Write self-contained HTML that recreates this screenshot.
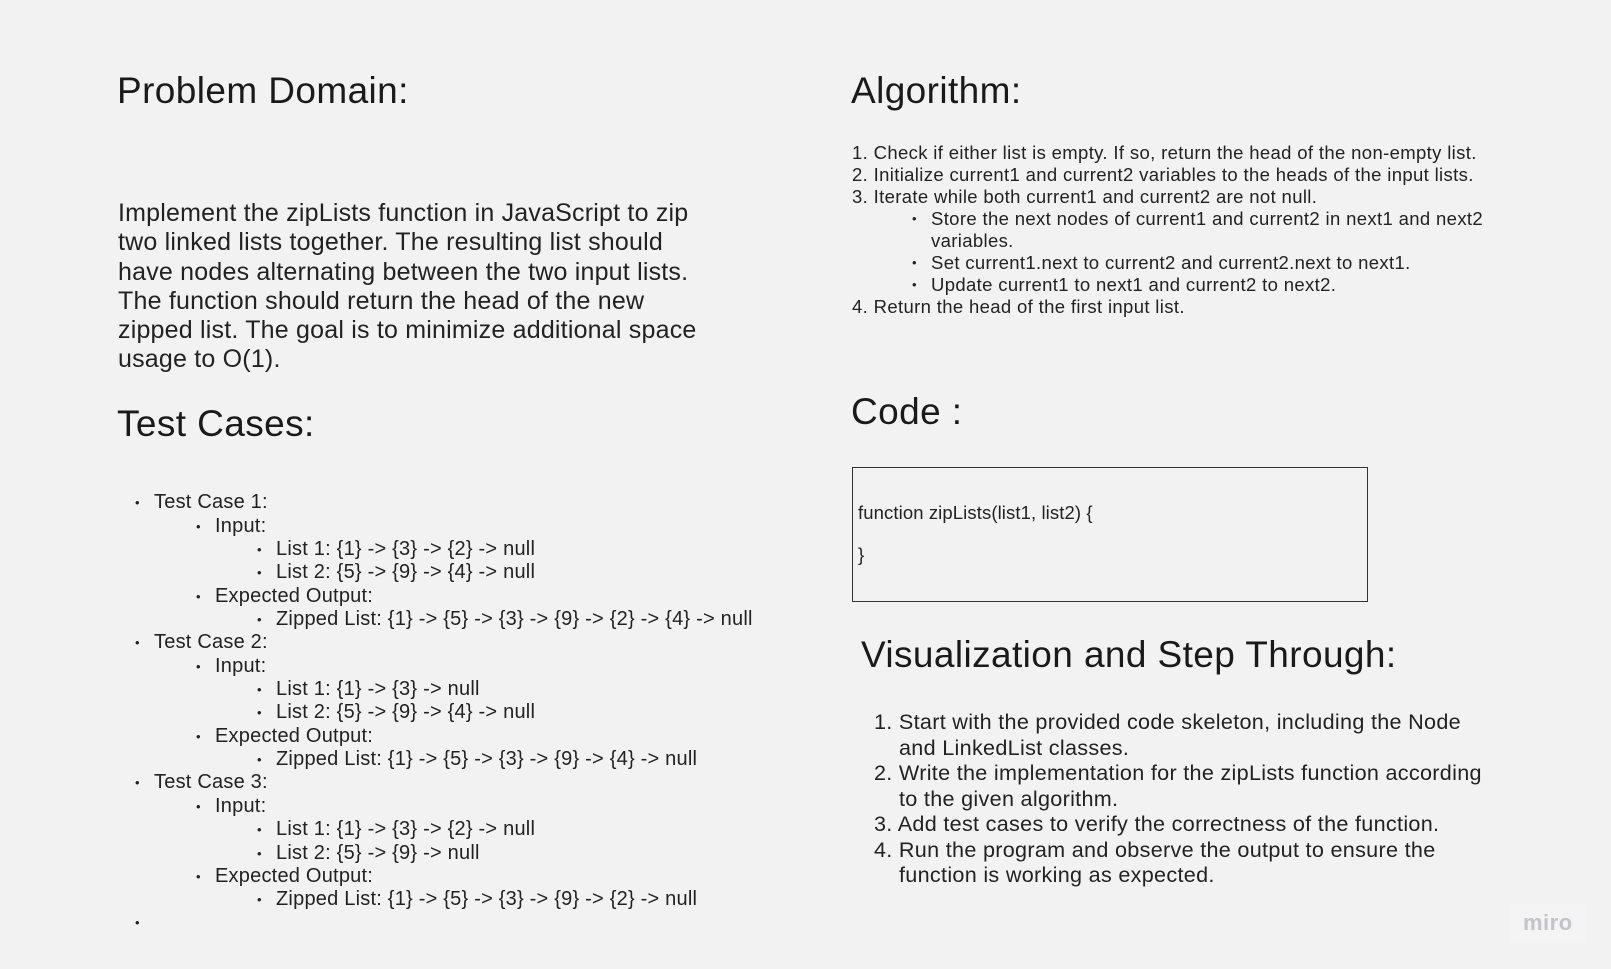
<!DOCTYPE html>
<html><head><meta charset="utf-8"><style>
html,body{margin:0;padding:0}
body{width:1611px;height:969px;background:#f2f2f2;position:relative;overflow:hidden;font-family:"Liberation Sans",Arial,sans-serif;color:#222}
.a{position:absolute;white-space:nowrap}
h1{position:absolute;margin:0;font-weight:normal;font-size:37px;line-height:44px;white-space:nowrap;color:#1a1a1a;letter-spacing:0.4px}
.p{font-size:25px;line-height:29.3px;letter-spacing:0.2px}
.t div{position:absolute;white-space:nowrap;font-size:20px;line-height:23.3px;height:23.3px;letter-spacing:0.22px}
.b::before{content:"•";position:absolute;font-size:13px;margin-left:-19px;letter-spacing:0}
.al div{position:absolute;white-space:nowrap;font-size:18.5px;line-height:22px;letter-spacing:0.35px}
.v div{position:absolute;white-space:nowrap;font-size:21.6px;line-height:25.5px;letter-spacing:0.3px}
.c{font-size:18.5px;line-height:22px;letter-spacing:0.1px}
</style></head><body>
<h1 style="left:117px;top:69px">Problem Domain:</h1>
<h1 style="left:851px;top:69px">Algorithm:</h1>
<div class="a p" style="left:118px;top:199px">Implement the zipLists function in JavaScript to zip<br>two linked lists together. The resulting list should<br>have nodes alternating between the two input lists.<br>The function should return the head of the new<br>zipped list. The goal is to minimize additional space<br>usage to O(1).</div>
<h1 style="left:117px;top:402px">Test Cases:</h1>
<div class="t">
<div class="b" style="left:154px;top:491px">Test Case 1:</div>
<div class="b" style="left:215px;top:515px">Input:</div>
<div class="b" style="left:276px;top:538px">List 1: {1} -&gt; {3} -&gt; {2} -&gt; null</div>
<div class="b" style="left:276px;top:561px">List 2: {5} -&gt; {9} -&gt; {4} -&gt; null</div>
<div class="b" style="left:215px;top:585px">Expected Output:</div>
<div class="b" style="left:276px;top:608px">Zipped List: {1} -&gt; {5} -&gt; {3} -&gt; {9} -&gt; {2} -&gt; {4} -&gt; null</div>
<div class="b" style="left:154px;top:631px">Test Case 2:</div>
<div class="b" style="left:215px;top:655px">Input:</div>
<div class="b" style="left:276px;top:678px">List 1: {1} -&gt; {3} -&gt; null</div>
<div class="b" style="left:276px;top:701px">List 2: {5} -&gt; {9} -&gt; {4} -&gt; null</div>
<div class="b" style="left:215px;top:725px">Expected Output:</div>
<div class="b" style="left:276px;top:748px">Zipped List: {1} -&gt; {5} -&gt; {3} -&gt; {9} -&gt; {4} -&gt; null</div>
<div class="b" style="left:154px;top:771px">Test Case 3:</div>
<div class="b" style="left:215px;top:795px">Input:</div>
<div class="b" style="left:276px;top:818px">List 1: {1} -&gt; {3} -&gt; {2} -&gt; null</div>
<div class="b" style="left:276px;top:842px">List 2: {5} -&gt; {9} -&gt; null</div>
<div class="b" style="left:215px;top:865px">Expected Output:</div>
<div class="b" style="left:276px;top:888px">Zipped List: {1} -&gt; {5} -&gt; {3} -&gt; {9} -&gt; {2} -&gt; null</div>
<div class="b" style="left:154px;top:911px">&nbsp;</div>
</div>
<div class="al">
<div style="left:852px;top:142px">1. Check if either list is empty. If so, return the head of the non-empty list.</div>
<div style="left:852px;top:164px">2. Initialize current1 and current2 variables to the heads of the input lists.</div>
<div style="left:852px;top:186px">3. Iterate while both current1 and current2 are not null.</div>
<div class="b" style="left:931px;top:208px">Store the next nodes of current1 and current2 in next1 and next2</div>
<div style="left:931px;top:230px">variables.</div>
<div class="b" style="left:931px;top:252px">Set current1.next to current2 and current2.next to next1.</div>
<div class="b" style="left:931px;top:274px">Update current1 to next1 and current2 to next2.</div>
<div style="left:852px;top:296px">4. Return the head of the first input list.</div>
</div>
<h1 style="left:851px;top:390px">Code :</h1>
<div class="a" style="left:852px;top:467px;width:514px;height:133px;border:1.5px solid #333"></div>
<div class="a c" style="left:858px;top:502px">function zipLists(list1, list2) {</div>
<div class="a c" style="left:858px;top:544px">}</div>
<h1 style="left:861px;top:633px">Visualization and Step Through:</h1>
<div class="v">
<div style="left:874px;top:709px">1. Start with the provided code skeleton, including the Node</div>
<div style="left:899px;top:735px">and LinkedList classes.</div>
<div style="left:874px;top:760px">2. Write the implementation for the zipLists function according</div>
<div style="left:899px;top:786px">to the given algorithm.</div>
<div style="left:874px;top:811px">3. Add test cases to verify the correctness of the function.</div>
<div style="left:874px;top:837px">4. Run the program and observe the output to ensure the</div>
<div style="left:899px;top:862px">function is working as expected.</div>
</div>
<div class="a" style="left:1510px;top:904px;width:76px;height:38px;background:#f4f4f5"></div>
<div class="a" style="left:1523px;top:909px;font-size:22px;line-height:28px;color:#c3c3ca;font-weight:bold;letter-spacing:0.5px">miro</div>
</body></html>
